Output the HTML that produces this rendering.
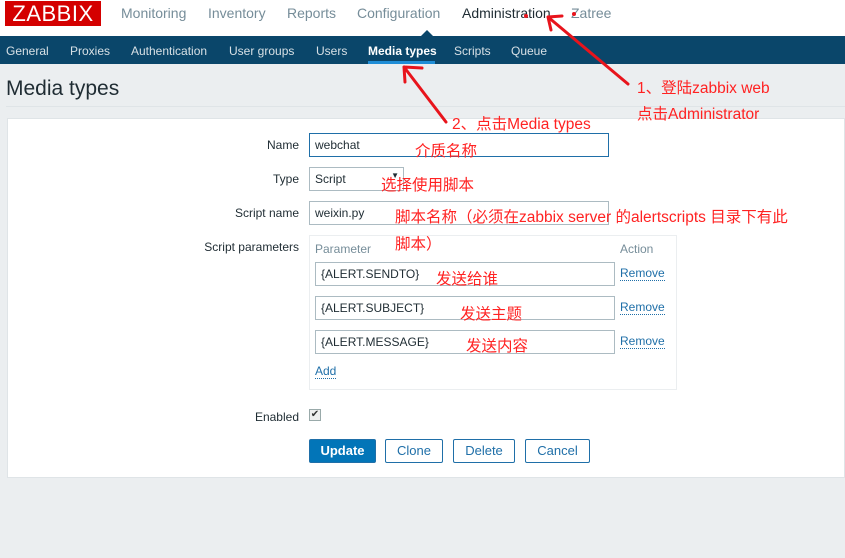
<!DOCTYPE html>
<html><head><meta charset="utf-8"><style>
*{margin:0;padding:0;box-sizing:border-box}
body{width:845px;height:558px;overflow:hidden;background:#ebeef0;font-family:"Liberation Sans",Arial,sans-serif;position:relative;color:#1f2c33}
.hdr{position:absolute;left:0;top:0;width:845px;height:36px;background:#fff}
.logo{position:absolute;left:5px;top:1px;width:96px;height:25px;background:#d40000;color:#fff;font-size:22px;line-height:25px;text-align:center;letter-spacing:0.5px}
.top a{position:absolute;top:5px;font-size:14px;color:#768d99}
.nav{position:absolute;left:0;top:36px;width:845px;height:28px;background:#0a466a}
.nav span{position:absolute;top:8px;font-size:12px;color:#d7e0e5}
.abs{position:absolute}
.lbl{position:absolute;font-size:12px;color:#1f2c33;text-align:right;width:200px;left:99px}
.inp{position:absolute;background:#fff;border:1px solid #acbbc2;font-size:12px;padding:4px 5px;height:24px}
.rm{position:absolute;left:620px;font-size:12px;color:#1f6fa8;border-bottom:1px dotted #1f6fa8;line-height:13px}
.btn{position:absolute;top:439px;height:24px;border:1px solid #1f6fa8;border-radius:2px;font-size:13px;color:#1f6fa8;text-align:center;line-height:22px;background:#fff}
.red{position:absolute;color:#f22;font-family:"Liberation Sans","Noto Sans CJK SC",sans-serif;font-size:15.5px;white-space:nowrap}
</style></head><body>
<div class="hdr"></div>
<div class="logo">ZABBIX</div>
<div class="top"><a style="left:121px">Monitoring</a><a style="left:208px">Inventory</a><a style="left:287px">Reports</a><a style="left:357px">Configuration</a><a style="left:462px;color:#1f2c33">Administration</a><a style="left:571px">Zatree</a></div>
<div class="abs" style="left:421px;top:30px;width:0;height:0;border-left:6px solid transparent;border-right:6px solid transparent;border-bottom:6px solid #0a466a"></div>
<div class="nav"><span style="left:6px">General</span><span style="left:70px">Proxies</span><span style="left:131px">Authentication</span><span style="left:229px">User groups</span><span style="left:316px">Users</span><span style="left:368px;color:#fff;font-weight:bold">Media types</span><span style="left:454px">Scripts</span><span style="left:511px">Queue</span></div>
<div class="abs" style="left:368px;top:61px;width:67px;height:3px;background:#1f8dd6"></div>
<div class="abs" style="left:6px;top:77px;font-size:21px;color:#1f2c33">Media types</div>
<div class="abs" style="left:6px;top:106px;width:839px;height:1px;background:#dfe4e7"></div>
<div class="abs" style="left:7px;top:118px;width:838px;height:360px;background:#fff;border:1px solid #dfe4e7"></div>
<div class="lbl" style="top:138px">Name</div>
<div class="inp" style="left:309px;top:133px;width:300px;border-color:#1f6fa8">webchat</div>
<div class="lbl" style="top:172px">Type</div>
<div class="inp" style="left:309px;top:167px;width:95px">Script<span style="position:absolute;right:4px;top:3px;font-size:8px">▼</span></div>
<div class="lbl" style="top:206px">Script name</div>
<div class="inp" style="left:309px;top:201px;width:300px">weixin.py</div>
<div class="lbl" style="top:240px">Script parameters</div>
<div class="abs" style="left:309px;top:235px;width:368px;height:155px;border:1px solid #ebeef0"></div>
<div class="abs" style="left:315px;top:242px;font-size:12px;color:#768d99">Parameter</div>
<div class="abs" style="left:620px;top:242px;font-size:12px;color:#768d99">Action</div>
<div class="inp" style="left:315px;top:262px;width:300px">{ALERT.SENDTO}</div><div class="rm" style="top:267px">Remove</div>
<div class="inp" style="left:315px;top:296px;width:300px">{ALERT.SUBJECT}</div><div class="rm" style="top:301px">Remove</div>
<div class="inp" style="left:315px;top:330px;width:300px">{ALERT.MESSAGE}</div><div class="rm" style="top:335px">Remove</div>
<div class="rm" style="left:315px;top:365px">Add</div>
<div class="lbl" style="top:410px">Enabled</div>
<div class="abs" style="left:309px;top:409px;width:12px;height:12px;border:1px solid #9aa;background:#eee;font-size:10px;line-height:10px;text-align:center;color:#333">✔</div>
<div class="btn" style="left:309px;width:67px;background:#0275b8;color:#fff;font-weight:bold">Update</div>
<div class="btn" style="left:385px;width:58px">Clone</div>
<div class="btn" style="left:453px;width:62px">Delete</div>
<div class="btn" style="left:525px;width:65px">Cancel</div>
<div class="red" style="left:415px;top:139px">介质名称</div>
<div class="red" style="left:381px;top:173px">选择使用脚本</div>
<div class="red" style="left:395px;top:205px">脚本名称（必须在zabbix server 的alertscripts 目录下有此</div>
<div class="red" style="left:395px;top:232px">脚本）</div>
<div class="red" style="left:436px;top:267px">发送给谁</div>
<div class="red" style="left:460px;top:302px">发送主题</div>
<div class="red" style="left:466px;top:334px">发送内容</div>
<div class="red" style="left:452px;top:112px">2、点击Media types</div>
<div class="red" style="left:637px;top:76px">1、登陆zabbix web</div>
<div class="red" style="left:637px;top:102px">点击Administrator</div>
<svg class="abs" style="left:0;top:0" width="845" height="558"><g stroke="#e8141c" stroke-width="3" fill="none" stroke-linecap="round">
<path d="M628 84 L548 17 M548 17 L562 16 M548 17 L551 30"/>
<path d="M446 122 L404 67 M404 67 L422 68 M404 67 L405 82"/>
</g><circle cx="526" cy="16" r="2" fill="#e8141c"/><circle cx="574" cy="14" r="2" fill="#e8141c"/></svg>
</body></html>
